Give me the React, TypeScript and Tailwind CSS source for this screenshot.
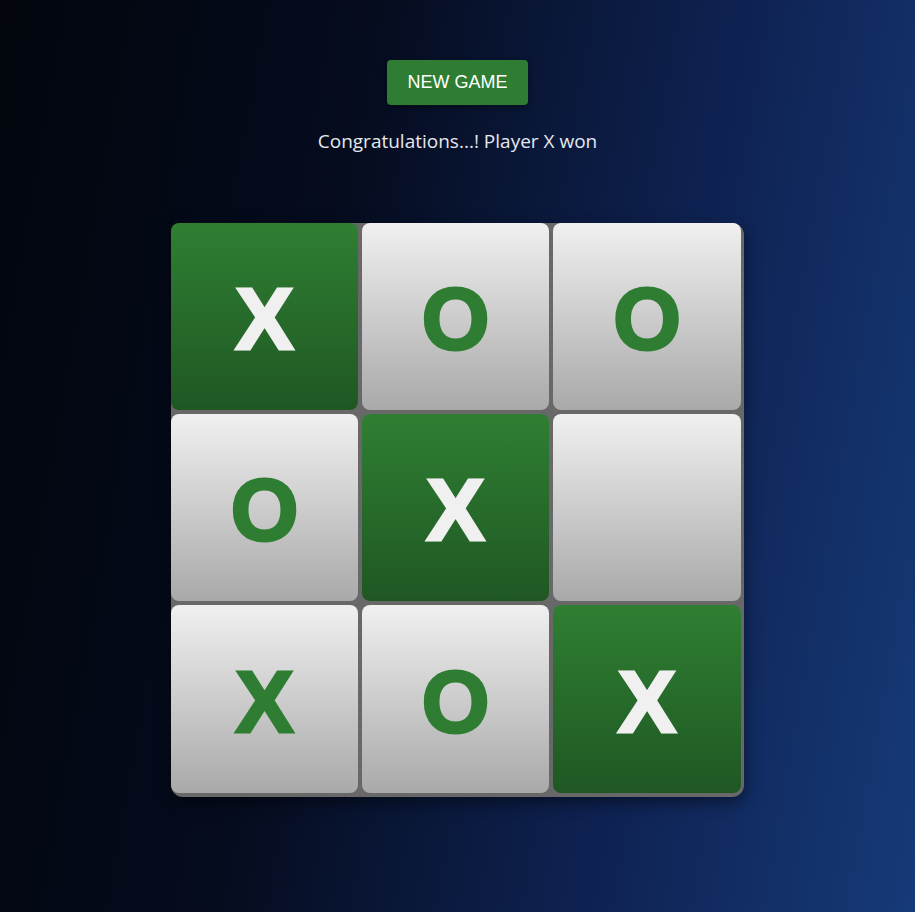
import { useState } from "react";

const start = ["X", "O", "O", "O", "X", "", "X", "O", "X"];
const winLine = [0, 4, 8];

export default function App() {
    const [cells, setCells] = useState<string[]>(start);
    const [win, setWin] = useState<number[]>(winLine);

    function newGame() {
        setCells(Array(9).fill(""));
        setWin([]);
    }

    return (
        <main className="min-h-screen w-full bg-[linear-gradient(100deg,#02050c_0%,#050c1e_35%,#0e2150_68%,#163a78_100%)] font-['Liberation_Sans',Arial,sans-serif]">
            <div className="flex flex-col items-center pt-[60px]">
                <button
                    onClick={newGame}
                    className="h-[45px] w-[141px] rounded bg-[#2e7d32] text-[18px] text-white shadow-[0_2px_6px_rgba(0,0,0,0.4)]"
                >
                    NEW GAME
                </button>
                <p className="mt-[23px] font-['Open_Sans','Noto_Sans',sans-serif] text-[19px] leading-[26px] text-[#e6e8ee]">
                    {win.length ? "Congratulations...! Player X won" : "Player X's turn"}
                </p>
                <div className="mt-[69px] rounded-[12px] bg-[#686868] pr-[3px] pb-[4px] shadow-[0_6px_16px_rgba(0,0,0,0.45)]">
                    <div className="grid grid-cols-[187px_187px_188px] grid-rows-[187px_187px_188px] gap-[4px]">
                        {cells.map((c, i) => {
                            const green = win.includes(i);
                            return (
                                <div
                                    key={i}
                                    className={
                                        green
                                            ? "flex items-center justify-center rounded-[8px] bg-[linear-gradient(180deg,#2f7f33_0%,#1f5723_100%)] text-[#f0f0f0]"
                                            : "flex items-center justify-center rounded-[8px] bg-[linear-gradient(180deg,#f0f0f0_0%,#a9a9a9_100%)] text-[#2e7d32]"
                                    }
                                >
                                    <span className="pt-[4px] text-[87px] leading-none font-bold [-webkit-text-stroke:3px_currentColor]">{c}</span>
                                </div>
                            );
                        })}
                    </div>
                </div>
            </div>
        </main>
    );
}
